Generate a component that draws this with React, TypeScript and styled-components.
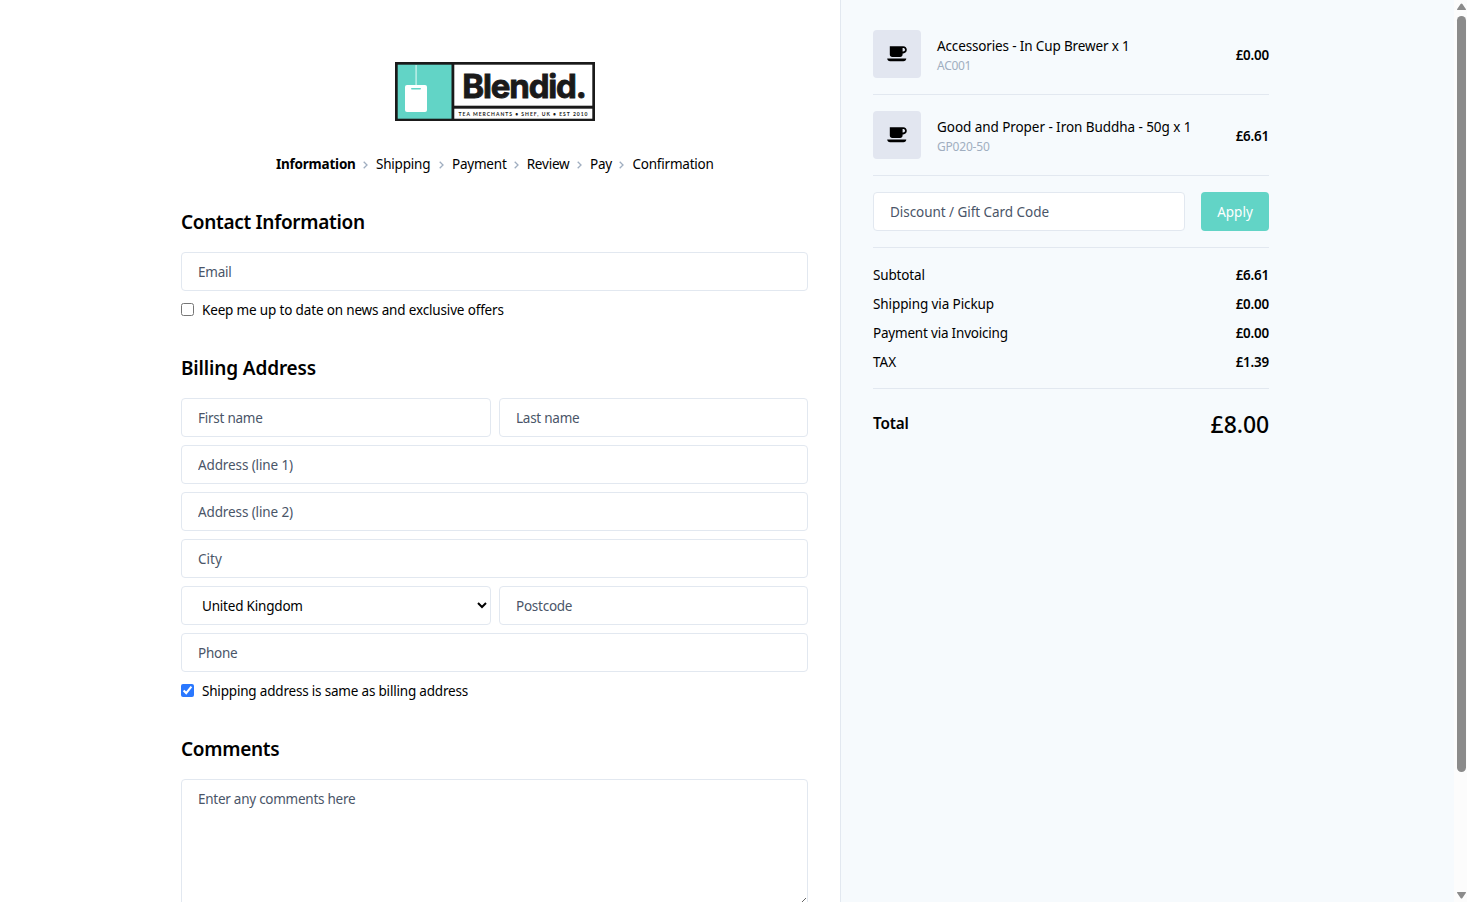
import React from "react";
import styled, { createGlobalStyle } from "styled-components";

const GlobalStyle = createGlobalStyle`
  *, *::before, *::after { box-sizing: border-box; }
  html, body { margin: 0; height: 902px; overflow: hidden; background: #fff; }
  body, input, select, textarea, button {
    font-family: "Segoe UI", "Noto Sans", sans-serif;
    font-size: 13.5px;
    line-height: 21px;
    color: #000;
  }
`;

const Page = styled.div`
  display: flex;
  height: 902px;
  overflow: hidden;
`;

const Main = styled.main`
  width: 840px;
  flex: none;
  padding: 62px 32px 0 181px;
  display: flex;
  flex-direction: column;
`;

const Sidebar = styled.aside`
  width: 614px;
  flex: none;
  background: #f6fafd;
  border-left: 1px solid #e2e8f0;
  padding: 30px 185px 0 32px;
`;

const ScrollTrack = styled.div`
  width: 13px;
  flex: none;
  background: #fcfcfc;
  svg { display: block; }
`;

const LogoLink = styled.a`
  align-self: center;
  display: block;
  width: 200px;
  height: 59px;
  svg { display: block; }
`;

const Steps = styled.nav`
  display: flex;
  align-items: center;
  justify-content: center;
  height: 21px;
  margin-top: 33px;
  svg { flex: none; margin: 0 8px; }
`;

const Step = styled.span<{ $w: number; $active?: boolean }>`
  width: ${(p) => p.$w}px;
  white-space: nowrap;
  font-weight: ${(p) => (p.$active ? 700 : 400)};
  letter-spacing: -0.22px;
`;

const Section = styled.section`
  margin-top: 32px;
  display: flex;
  flex-direction: column;
`;

const Heading = styled.h2<{ $track: number }>`
  margin: 0 0 15px;
  font-size: 19px;
  line-height: 30px;
  font-weight: 600;
  letter-spacing: ${(p) => p.$track}px;
`;

const Fields = styled.div`
  display: grid;
  grid-template-columns: 310px 309px;
  gap: 8px;
`;

const Input = styled.input<{ $wide?: boolean; $track?: number }>`
  grid-column: ${(p) => (p.$wide ? "1 / -1" : "auto")};
  width: 100%;
  min-width: 0;
  height: 39px;
  padding: 9px 16px 8px;
  border: 1px solid #e2e8f0;
  border-radius: 4px;
  background: #fff;
  outline: none;
  letter-spacing: ${(p) => p.$track ?? -0.25}px;
  &::placeholder { color: #4a5568; opacity: 1; }
`;

const Select = styled.select`
  width: 100%;
  height: 39px;
  padding: 1px 0 0 16px;
  border: 1px solid #e2e8f0;
  border-radius: 4px;
  background: #fff;
  outline: none;
  letter-spacing: -0.2px;
`;

const TextArea = styled.textarea`
  width: 100%;
  height: 128px;
  padding: 9px 16px;
  border: 1px solid #e2e8f0;
  border-radius: 4px;
  outline: none;
  resize: both;
  letter-spacing: -0.26px;
  &::placeholder { color: #4a5568; opacity: 1; }
`;

const CheckRow = styled.label`
  display: flex;
  align-items: center;
  gap: 8px;
  height: 21px;
  margin-top: 9px;
  input { margin: 0 0 2px; width: 13px; height: 13px; accent-color: #2a78ff; }
`;

const CheckText = styled.span<{ $track: number }>`
  white-space: nowrap;
  letter-spacing: ${(p) => p.$track}px;
`;

const Item = styled.div`
  display: flex;
  align-items: center;
  height: 65px;
  padding-bottom: 16px;
  margin-bottom: 16px;
  border-bottom: 1px solid #e2e8f0;
`;

const Thumb = styled.div`
  width: 48px;
  height: 48px;
  flex: none;
  display: flex;
  align-items: center;
  justify-content: center;
  background: #e2e6f0;
  border-radius: 4px;
`;

const ItemText = styled.div`
  flex: 1;
  margin-left: 16px;
  padding-top: 5px;
  display: flex;
  flex-direction: column;
`;

const ItemName = styled.span<{ $track: number }>`
  line-height: 19px;
  white-space: nowrap;
  letter-spacing: ${(p) => p.$track}px;
`;

const Sku = styled.span<{ $track: number }>`
  font-size: 12px;
  line-height: 20px;
  color: #a0aec0;
  letter-spacing: ${(p) => p.$track}px;
`;

const Price = styled.span<{ $drop?: number }>`
  padding-top: ${(p) => p.$drop ?? 0}px;
  font-weight: 600;
  font-size: 13.4px;
  letter-spacing: -0.2px;
`;

const Coupon = styled.div`
  display: flex;
  gap: 16px;
  padding-bottom: 16px;
  border-bottom: 1px solid #e2e8f0;
`;

const Apply = styled.button`
  width: 68px;
  height: 39px;
  flex: none;
  padding: 2px 0 0;
  border: 0;
  border-radius: 4px;
  background: #62d4c6;
  color: #fff;
`;

const Totals = styled.div`
  display: flex;
  flex-direction: column;
  gap: 8px;
  padding: 17px 0 15px;
  border-bottom: 1px solid #e2e8f0;
`;

const Line = styled.div`
  display: flex;
  justify-content: space-between;
  height: 21px;
`;

const LineLabel = styled.span<{ $track: number }>`
  letter-spacing: ${(p) => p.$track}px;
`;

const Grand = styled.div`
  display: flex;
  align-items: center;
  justify-content: space-between;
  height: 38px;
  margin-top: 16px;
`;

const GrandLabel = styled.span`
  margin-top: -2px;
  font-size: 15.3px;
  font-weight: 600;
  letter-spacing: -0.2px;
`;

const GrandPrice = styled.span`
  font-size: 23px;
  line-height: 38px;
  font-weight: 500;
  letter-spacing: -0.1px;
`;

const Wordmark = styled.text`
  font-family: Inter, sans-serif;
  font-weight: 700;
  font-size: 33px;
  letter-spacing: -1.15px;
  fill: #1a1a1a;
  stroke: #1a1a1a;
  stroke-width: 0.9px;
`;

const Tagline = styled.text`
  font-family: Lato, sans-serif;
  font-weight: 700;
  font-size: 5px;
  fill: #1a1a1a;
`;

const Logo = () => (
  <svg width="200" height="59" viewBox="0 0 200 59">
    <rect width="200" height="59" fill="#1a1a1a" />
    <rect x="2.7" y="2.7" width="53.8" height="54" fill="#62d4c6" />
    <rect x="59.3" y="2.7" width="138" height="41" fill="#fff" />
    <rect x="59.3" y="46.7" width="138" height="10" fill="#fff" />
    <rect x="20.4" y="3" width="1.4" height="21" fill="#c4f0ea" />
    <rect x="10" y="23" width="22" height="27" rx="2" fill="#fff" />
    <rect x="16" y="26" width="10" height="1.6" rx="0.8" fill="#62d4c6" />
    <Wordmark x="67.3" y="35.5">Blendid.</Wordmark>
    <Tagline x="63.5" y="53.6" textLength="129" lengthAdjust="spacing">TEA MERCHANTS • SHEF, UK • EST 2010</Tagline>
  </svg>
);

const Cup = () => (
  <svg width="20" height="16" viewBox="0 0 20 16">
    <path
      fillRule="evenodd"
      d="M2.8 0.2H16.2C18.4 0.2 19.8 1.7 19.8 3.8S18.4 7.4 16.2 7.4H15.6V8.5C15.6 10 14.6 11 13.1 11H5.3C3.8 11 2.8 10 2.8 8.5ZM15.6 2.1V5.5H16.1C17.3 5.5 18 4.9 18 3.8S17.3 2.1 16.1 2.1Z"
    />
    <path d="M0.2 12.4H19.3C19.1 14.2 18.2 15.2 16.4 15.2H3.1C1.4 15.2 0.4 14.2 0.2 12.4Z" />
  </svg>
);

const Chevron = () => (
  <svg width="5" height="8" viewBox="0 0 5 8" fill="none" stroke="#a0aec0" strokeWidth="1.3">
    <path d="M0.7 0.8 4 4 0.7 7.2" />
  </svg>
);

const steps = [
  { label: "Information", w: 79, active: true },
  { label: "Shipping", w: 55 },
  { label: "Payment", w: 53.7 },
  { label: "Review", w: 42.3 },
  { label: "Pay", w: 21.5 },
  { label: "Confirmation", w: 80.5 },
];

const items = [
  { name: "Accessories - In Cup Brewer x 1", track: -0.14, sku: "AC001", skuTrack: -0.3, price: "£0.00" },
  { name: "Good and Proper - Iron Buddha - 50g x 1", track: -0.06, sku: "GP020-50", skuTrack: -0.2, price: "£6.61" },
];

const totals = [
  { label: "Subtotal", track: -0.15, value: "£6.61" },
  { label: "Shipping via Pickup", track: -0.1, value: "£0.00" },
  { label: "Payment via Invoicing", track: -0.2, value: "£0.00" },
  { label: "TAX", track: 0, value: "£1.39" },
];

export default function App() {
  return (
    <Page>
      <GlobalStyle />
      <Main>
        <LogoLink><Logo /></LogoLink>
        <Steps>
          {steps.map((s, i) => (
            <React.Fragment key={s.label}>
              {i > 0 && <Chevron />}
              <Step $w={s.w} $active={s.active}>{s.label}</Step>
            </React.Fragment>
          ))}
        </Steps>
        <Section>
          <Heading $track={-0.3}>Contact Information</Heading>
          <Input $wide placeholder="Email" />
          <CheckRow>
            <input type="checkbox" />
            <CheckText $track={-0.16}>Keep me up to date on news and exclusive offers</CheckText>
          </CheckRow>
        </Section>
        <Section>
          <Heading $track={-0.15}>Billing Address</Heading>
          <Fields>
            <Input placeholder="First name" />
            <Input placeholder="Last name" />
            <Input $wide $track={-0.12} placeholder="Address (line 1)" />
            <Input $wide $track={-0.12} placeholder="Address (line 2)" />
            <Input $wide $track={0} placeholder="City" />
            <Select defaultValue="UK"><option value="UK">United Kingdom</option></Select>
            <Input placeholder="Postcode" />
            <Input $wide placeholder="Phone" />
          </Fields>
          <CheckRow>
            <input type="checkbox" defaultChecked />
            <CheckText $track={-0.19}>Shipping address is same as billing address</CheckText>
          </CheckRow>
        </Section>
        <Section>
          <Heading $track={-0.3}>Comments</Heading>
          <TextArea placeholder="Enter any comments here" />
        </Section>
      </Main>
      <Sidebar>
        {items.map((it) => (
          <Item key={it.sku}>
            <Thumb><Cup /></Thumb>
            <ItemText>
              <ItemName $track={it.track}>{it.name}</ItemName>
              <Sku $track={it.skuTrack}>{it.sku}</Sku>
            </ItemText>
            <Price $drop={2}>{it.price}</Price>
          </Item>
        ))}
        <Coupon>
          <Input $track={-0.05} placeholder="Discount / Gift Card Code" />
          <Apply>Apply</Apply>
        </Coupon>
        <Totals>
          {totals.map((t) => (
            <Line key={t.label}><LineLabel $track={t.track}>{t.label}</LineLabel><Price>{t.value}</Price></Line>
          ))}
        </Totals>
        <Grand>
          <GrandLabel>Total</GrandLabel>
          <GrandPrice>£8.00</GrandPrice>
        </Grand>
      </Sidebar>
      <ScrollTrack>
        <svg width="13" height="902" viewBox="0 0 13 902" fill="#8b8b8b">
          <path d="M3.6 10 Q2.5 10 3.2 9 L6.6 4 Q7.5 2.8 8.4 4 L11.8 9 Q12.5 10 11.4 10Z" />
          <rect x="3" y="16" width="9" height="756" rx="4.5" />
          <path d="M3.6 892 Q2.5 892 3.2 893 L6.6 898 Q7.5 899.2 8.4 898 L11.8 893 Q12.5 892 11.4 892Z" />
        </svg>
      </ScrollTrack>
    </Page>
  );
}
